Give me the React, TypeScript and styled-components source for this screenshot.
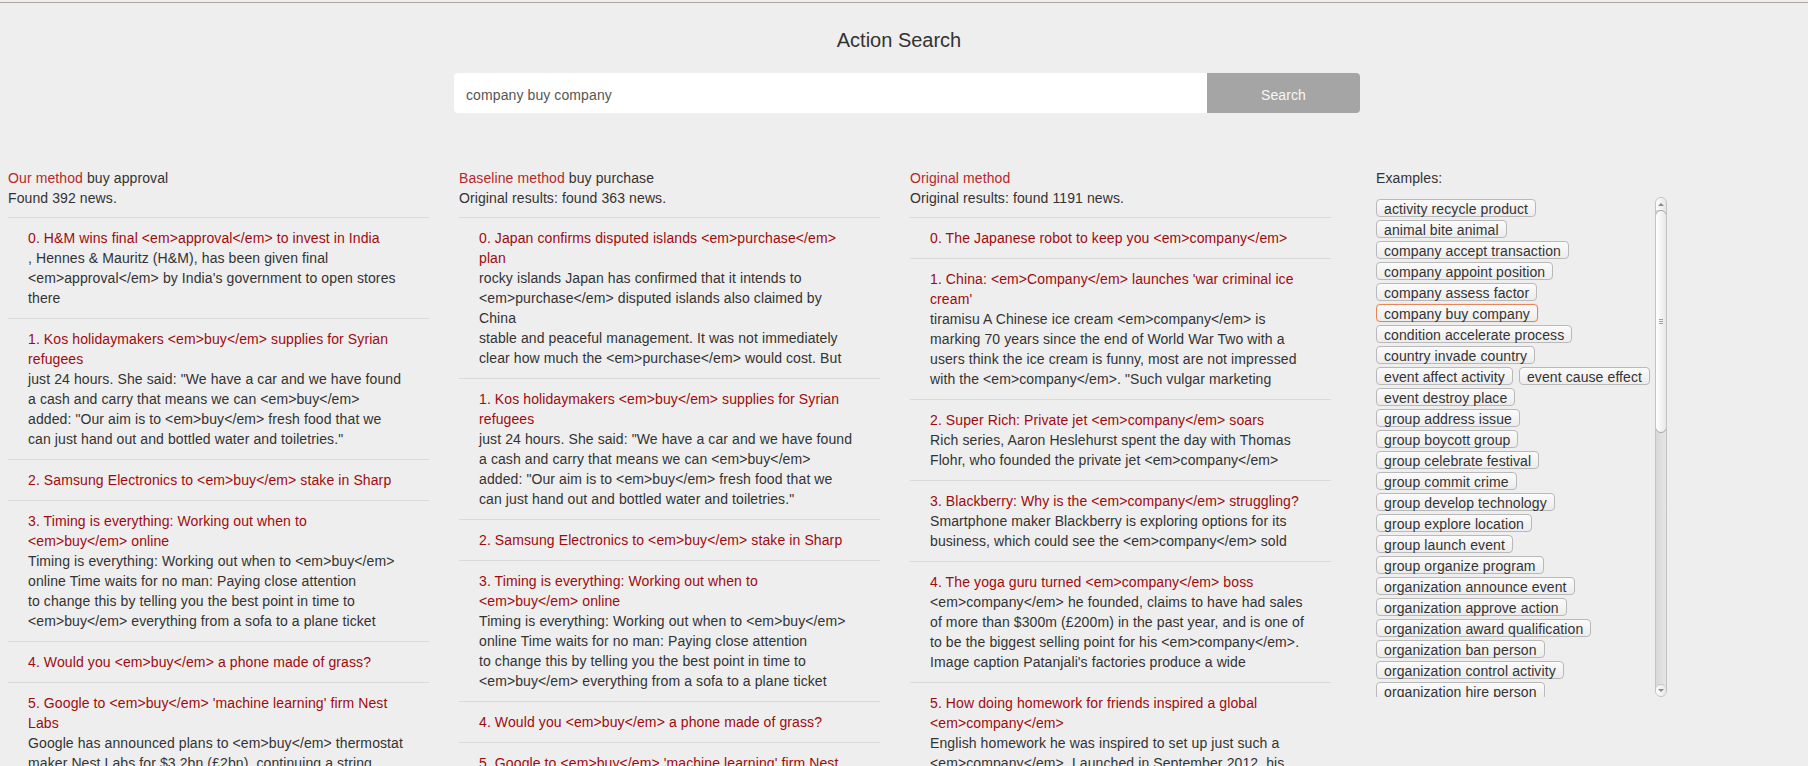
import React from "react";
import styled, { createGlobalStyle } from "styled-components";

const GlobalStyle = createGlobalStyle`
  html, body {
    margin: 0;
    padding: 0;
    background: #eeeeee;
    overflow: hidden;
  }
  body {
    font-family: "Liberation Sans", Arial, Helvetica, sans-serif;
    font-size: 14px;
    color: #333333;
  }
  * { box-sizing: border-box; }
`;

const Page = styled.div`
  min-height: 766px;
`;

const TopRule = styled.div`
  margin-top: 2px;
  height: 1px;
  background: #aca89f;
`;

const Header = styled.header`
  display: flex;
  flex-direction: column;
  align-items: center;
`;

const Title = styled.h1`
  margin: 26px 10px 0 0;
  font-size: 20px;
  line-height: 22px;
  font-weight: normal;
  color: #333333;
`;

const SearchForm = styled.form`
  display: flex;
  width: 906px;
  height: 40px;
  margin: 22px 0 0 6px;
`;

const SearchInput = styled.input`
  flex: 1;
  min-width: 0;
  border: none;
  border-radius: 4px 0 0 4px;
  background: #ffffff;
  padding: 4px 12px 0;
  font: 14px "Liberation Sans", Arial, sans-serif;
  letter-spacing: 0.1px;
  color: #555555;
  outline: none;
`;

const SearchButton = styled.button`
  width: 153px;
  border: none;
  border-radius: 0 4px 4px 0;
  background: #a5a5a5;
  color: #f7f7f7;
  padding: 4px 0 0;
  font: 14px "Liberation Sans", Arial, sans-serif;
  letter-spacing: 0.1px;
  cursor: pointer;
`;

const Columns = styled.main`
  display: grid;
  grid-template-columns: 421px 421px 421px 1fr;
  column-gap: 30px;
  padding-left: 8px;
  margin-top: 55px;
  align-items: start;
  letter-spacing: 0.1px;
`;

const ResultColumn = styled.section``;

const ColumnHead = styled.div`
  line-height: 20px;
  padding-bottom: 9px;
`;

const MethodName = styled.span`
  color: #b8282b;
`;

const ResultItem = styled.article`
  border-top: 1px solid #dadada;
  padding: 10px 20px;
  line-height: 20px;
  white-space: nowrap;
`;

const ItemTitle = styled.div`
  color: #9e0b0f;
`;

const ItemBody = styled.div`
  color: #333333;
`;

const ExamplesColumn = styled.aside`
  padding-left: 15px;
`;

const ExamplesLabel = styled.div`
  line-height: 20px;
`;

const ExamplesBox = styled.div`
  display: flex;
  width: 291px;
  height: 500px;
  margin-top: 9px;
`;

const TagArea = styled.div`
  flex: 1;
  display: flex;
  flex-wrap: wrap;
  align-content: flex-start;
  gap: 3px 6px;
  padding-top: 2px;
  overflow: hidden;
`;

const Tag = styled.button<{ $active?: boolean }>`
  appearance: none;
  height: 18px;
  margin: 0;
  padding: 3px 7px 0;
  font: 14px/13px "Liberation Sans", Arial, sans-serif;
  letter-spacing: 0.1px;
  color: #333333;
  white-space: nowrap;
  background: linear-gradient(to bottom, #fbfbfb, #ececec);
  border: 1px solid ${(p) => (p.$active ? "#e8845a" : "#b9b9b9")};
  box-shadow: ${(p) => (p.$active ? "0 0 1px #f0a07c" : "none")};
  border-radius: 4px;
  cursor: pointer;
`;

const ScrollTrack = styled.div`
  width: 12px;
  height: 100%;
  display: flex;
  flex-direction: column;
  border: 1px solid #c3c3c3;
  border-radius: 6px;
  background: linear-gradient(to right, #d8d8d8, #e6e6e6);
  overflow: hidden;
`;

const ScrollArrow = styled.div<{ $dir: "up" | "down" }>`
  height: 12px;
  flex: none;
  display: flex;
  align-items: center;
  justify-content: center;
  background: linear-gradient(to right, #fdfdfd, #e6e6e6);
  ${(p) =>
    p.$dir === "down"
      ? "border-top: 1px solid #c3c3c3; border-radius: 6px 6px 0 0;"
      : ""}
  &::after {
    content: "";
    border-left: 3px solid transparent;
    border-right: 3px solid transparent;
    ${(p) =>
      p.$dir === "up"
        ? "border-bottom: 3px solid #8a8a8a;"
        : "border-top: 3px solid #8a8a8a;"}
  }
`;

const ScrollThumb = styled.div`
  height: 223px;
  flex: none;
  margin: 0 -1px;
  border: 1px solid #a8a8a8;
  border-radius: 6px;
  background: linear-gradient(to right, #ffffff, #e8e8e8);
  display: flex;
  flex-direction: column;
  align-items: center;
  justify-content: center;
  gap: 1px;
`;

const Grip = styled.span`
  width: 4px;
  height: 1px;
  background: #a0a0a0;
`;

const ScrollSpacer = styled.div`
  flex: 1;
`;

type Item = { title: string[]; body: string[] };

const ours: Item[] = [
  {
    title: ["0. H&M wins final <em>approval</em> to invest in India"],
    body: [
      ", Hennes & Mauritz (H&M), has been given final",
      "<em>approval</em> by India's government to open stores",
      "there",
    ],
  },
  {
    title: ["1. Kos holidaymakers <em>buy</em> supplies for Syrian", "refugees"],
    body: [
      'just 24 hours. She said: "We have a car and we have found',
      "a cash and carry that means we can <em>buy</em>",
      'added: "Our aim is to <em>buy</em> fresh food that we',
      'can just hand out and bottled water and toiletries."',
    ],
  },
  { title: ["2. Samsung Electronics to <em>buy</em> stake in Sharp"], body: [] },
  {
    title: ["3. Timing is everything: Working out when to", "<em>buy</em> online"],
    body: [
      "Timing is everything: Working out when to <em>buy</em>",
      "online Time waits for no man: Paying close attention",
      "to change this by telling you the best point in time to",
      "<em>buy</em> everything from a sofa to a plane ticket",
    ],
  },
  { title: ["4. Would you <em>buy</em> a phone made of grass?"], body: [] },
  {
    title: ["5. Google to <em>buy</em> 'machine learning' firm Nest", "Labs"],
    body: [
      "Google has announced plans to <em>buy</em> thermostat",
      "maker Nest Labs for $3.2bn (£2bn), continuing a string",
      "of acquisitions",
    ],
  },
];

const baseline: Item[] = [
  {
    title: ["0. Japan confirms disputed islands <em>purchase</em>", "plan"],
    body: [
      "rocky islands Japan has confirmed that it intends to",
      "<em>purchase</em> disputed islands also claimed by",
      "China",
      "stable and peaceful management. It was not immediately",
      "clear how much the <em>purchase</em> would cost. But",
    ],
  },
  ours[1],
  ours[2],
  ours[3],
  ours[4],
  {
    title: ["5. Google to <em>buy</em> 'machine learning' firm Nest", "Labs"],
    body: ["Google has announced plans to <em>buy</em> thermostat"],
  },
];

const original: Item[] = [
  { title: ["0. The Japanese robot to keep you <em>company</em>"], body: [] },
  {
    title: ["1. China: <em>Company</em> launches 'war criminal ice", "cream'"],
    body: [
      "tiramisu A Chinese ice cream <em>company</em> is",
      "marking 70 years since the end of World War Two with a",
      "users think the ice cream is funny, most are not impressed",
      'with the <em>company</em>. "Such vulgar marketing',
    ],
  },
  {
    title: ["2. Super Rich: Private jet <em>company</em> soars"],
    body: [
      "Rich series, Aaron Heslehurst spent the day with Thomas",
      "Flohr, who founded the private jet <em>company</em>",
    ],
  },
  {
    title: ["3. Blackberry: Why is the <em>company</em> struggling?"],
    body: [
      "Smartphone maker Blackberry is exploring options for its",
      "business, which could see the <em>company</em> sold",
    ],
  },
  {
    title: ["4. The yoga guru turned <em>company</em> boss"],
    body: [
      "<em>company</em> he founded, claims to have had sales",
      "of more than $300m (£200m) in the past year, and is one of",
      "to be the biggest selling point for his <em>company</em>.",
      "Image caption Patanjali's factories produce a wide",
    ],
  },
  {
    title: ["5. How doing homework for friends inspired a global", "<em>company</em>"],
    body: [
      "English homework he was inspired to set up just such a",
      "<em>company</em>. Launched in September 2012, his",
    ],
  },
];

const examples = [
  "activity recycle product",
  "animal bite animal",
  "company accept transaction",
  "company appoint position",
  "company assess factor",
  "company buy company",
  "condition accelerate process",
  "country invade country",
  "event affect activity",
  "event cause effect",
  "event destroy place",
  "group address issue",
  "group boycott group",
  "group celebrate festival",
  "group commit crime",
  "group develop technology",
  "group explore location",
  "group launch event",
  "group organize program",
  "organization announce event",
  "organization approve action",
  "organization award qualification",
  "organization ban person",
  "organization control activity",
  "organization hire person",
  "organization join group",
  "organization launch product",
];

const Results = ({ items }: { items: Item[] }) => (
  <>
    {items.map((it, i) => (
      <ResultItem key={i}>
        {it.title.map((t, j) => (
          <ItemTitle key={j}>{t}</ItemTitle>
        ))}
        {it.body.map((b, j) => (
          <ItemBody key={j}>{b}</ItemBody>
        ))}
      </ResultItem>
    ))}
  </>
);

export default function App() {
  return (
    <Page>
      <GlobalStyle />
      <TopRule />
      <Header>
        <Title>Action Search</Title>
        <SearchForm onSubmit={(e) => e.preventDefault()}>
          <SearchInput defaultValue="company buy company" />
          <SearchButton type="submit">Search</SearchButton>
        </SearchForm>
      </Header>
      <Columns>
        <ResultColumn>
          <ColumnHead>
            <MethodName>Our method</MethodName> buy approval
            <br />
            Found 392 news.
          </ColumnHead>
          <Results items={ours} />
        </ResultColumn>
        <ResultColumn>
          <ColumnHead>
            <MethodName>Baseline method</MethodName> buy purchase
            <br />
            Original results: found 363 news.
          </ColumnHead>
          <Results items={baseline} />
        </ResultColumn>
        <ResultColumn>
          <ColumnHead>
            <MethodName>Original method</MethodName>
            <br />
            Original results: found 1191 news.
          </ColumnHead>
          <Results items={original} />
        </ResultColumn>
        <ExamplesColumn>
          <ExamplesLabel>Examples:</ExamplesLabel>
          <ExamplesBox>
            <TagArea>
              {examples.map((ex) => (
                <Tag key={ex} type="button" $active={ex === "company buy company"}>
                  {ex}
                </Tag>
              ))}
            </TagArea>
            <ScrollTrack>
              <ScrollArrow $dir="up" />
              <ScrollThumb>
                <Grip />
                <Grip />
                <Grip />
              </ScrollThumb>
              <ScrollSpacer />
              <ScrollArrow $dir="down" />
            </ScrollTrack>
          </ExamplesBox>
        </ExamplesColumn>
      </Columns>
    </Page>
  );
}
